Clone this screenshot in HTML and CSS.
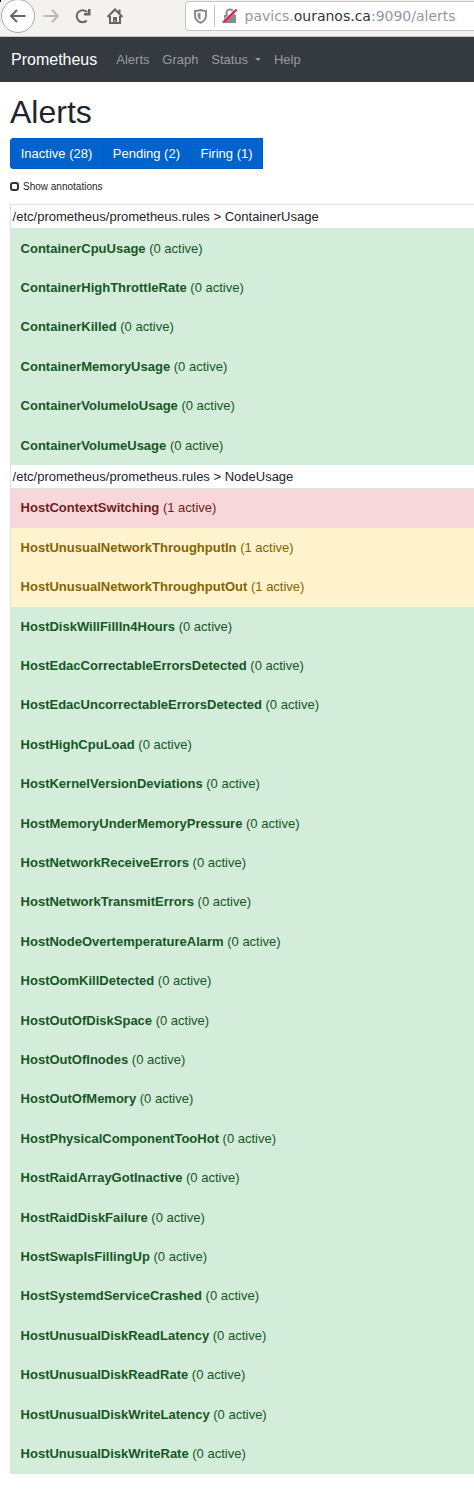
FILE: index.html
```
<!DOCTYPE html>
<html lang="en">
<head>
<meta charset="utf-8">
<title>Prometheus Alerts</title>
<link rel="stylesheet" href="styles.css">
</head>
<body>
<header class="toolbar">
  <span class="corner"></span>
  <span class="back"><svg width="16" height="14" viewBox="0 0 16 14"><path d="M15.500 7H1.500M7 1L1 7L7 13" /></svg></span>
  <svg class="forward" width="16" height="14" viewBox="0 0 16 14"><path d="M.5 7H14.500M9 1L15 7L9 13"/></svg>
  <svg class="reload" width="16" height="16" viewBox="0 0 16 16"><path d="M11.800 12.600A6 6 0 1 1 12.200 4.200"/><path class="solid" d="M13 1H15.500V7.500H9V5H13z"/></svg>
  <svg class="home" width="16" height="16" viewBox="0 0 16 16"><path d="M.5 9L8 1.500L15.500 9M3 8V15H13V8M12.500 1.500V5"/><path class="solid" d="M6 9H10V15H6z"/><path class="knob" d="M8 12V14"/></svg>
  <div class="address">
    <svg class="shield" width="13" height="15" viewBox="0 0 13 15"><path d="M6.500 1C5 1.700 3 2 1 2V6C1 10 3 12.500 6.500 13.800C10 12.500 12 10 12 6V2C10 2 8 1.700 6.500 1z"/><path class="solid" d="M6.500 3.700L3.600 4.200V6.500C3.700 8.700 4.500 10 6.500 11z"/></svg>
    <span class="divider"></span>
    <svg class="lock" width="16" height="16" viewBox="0 0 16 16"><path class="body" d="M2 7H14V15H2z"/><path class="shackle" d="M4.500 8V5A3.500 3.500 0 0 1 11.500 5V8"/><path class="halo" d="M.5 13L13.500 .5"/><path class="slash" d="M1 14.500L14.500 1.500"/></svg>
    <span class="url">pavics.<b>ouranos.ca</b>:9090/alerts</span>
  </div>
</header>
<nav class="navbar">
  <a class="brand">Prometheus</a>
  <a class="link">Alerts</a>
  <a class="link">Graph</a>
  <a class="link menu">Status</a>
  <a class="link">Help</a>
</nav>
<main>
  <h1>Alerts</h1>
  <div class="filters"><button>Inactive (28)</button><button>Pending (2)</button><button>Firing (1)</button></div>
  <label class="annotations"><span class="box"></span>Show annotations</label>
  <section class="rules">
    <div class="group">/etc/prometheus/prometheus.rules &gt; ContainerUsage</div>
    <div class="row"><b>ContainerCpuUsage</b> (0 active)</div>
    <div class="row"><b>ContainerHighThrottleRate</b> (0 active)</div>
    <div class="row"><b>ContainerKilled</b> (0 active)</div>
    <div class="row"><b>ContainerMemoryUsage</b> (0 active)</div>
    <div class="row"><b>ContainerVolumeIoUsage</b> (0 active)</div>
    <div class="row"><b>ContainerVolumeUsage</b> (0 active)</div>
    <div class="group">/etc/prometheus/prometheus.rules &gt; NodeUsage</div>
    <div class="row firing"><b>HostContextSwitching</b> (1 active)</div>
    <div class="row pending"><b>HostUnusualNetworkThroughputIn</b> (1 active)</div>
    <div class="row pending"><b>HostUnusualNetworkThroughputOut</b> (1 active)</div>
    <div class="row"><b>HostDiskWillFillIn4Hours</b> (0 active)</div>
    <div class="row"><b>HostEdacCorrectableErrorsDetected</b> (0 active)</div>
    <div class="row"><b>HostEdacUncorrectableErrorsDetected</b> (0 active)</div>
    <div class="row"><b>HostHighCpuLoad</b> (0 active)</div>
    <div class="row"><b>HostKernelVersionDeviations</b> (0 active)</div>
    <div class="row"><b>HostMemoryUnderMemoryPressure</b> (0 active)</div>
    <div class="row"><b>HostNetworkReceiveErrors</b> (0 active)</div>
    <div class="row"><b>HostNetworkTransmitErrors</b> (0 active)</div>
    <div class="row"><b>HostNodeOvertemperatureAlarm</b> (0 active)</div>
    <div class="row"><b>HostOomKillDetected</b> (0 active)</div>
    <div class="row"><b>HostOutOfDiskSpace</b> (0 active)</div>
    <div class="row"><b>HostOutOfInodes</b> (0 active)</div>
    <div class="row"><b>HostOutOfMemory</b> (0 active)</div>
    <div class="row"><b>HostPhysicalComponentTooHot</b> (0 active)</div>
    <div class="row"><b>HostRaidArrayGotInactive</b> (0 active)</div>
    <div class="row"><b>HostRaidDiskFailure</b> (0 active)</div>
    <div class="row"><b>HostSwapIsFillingUp</b> (0 active)</div>
    <div class="row"><b>HostSystemdServiceCrashed</b> (0 active)</div>
    <div class="row"><b>HostUnusualDiskReadLatency</b> (0 active)</div>
    <div class="row"><b>HostUnusualDiskReadRate</b> (0 active)</div>
    <div class="row"><b>HostUnusualDiskWriteLatency</b> (0 active)</div>
    <div class="row"><b>HostUnusualDiskWriteRate</b> (0 active)</div>
  </section>
</main>
</body>
</html>
```
FILE: styles.css
```
* { box-sizing: border-box; }
body {
  margin: 0;
  background: #fff;
  color: #212529;
  font: 13px/19.4px "Liberation Sans", Arial, sans-serif;
  overflow-x: hidden;
}
svg { flex: none; fill: none; stroke: #666664; stroke-width: 2; overflow: visible; }
svg .solid { fill: #666664; stroke: none; }

.toolbar {
  position: relative;
  display: flex;
  height: 37px;
  padding-left: 1px;
  background: #f3f2f0;
  border-bottom: 1px solid #c9c7c4;
  overflow: hidden;
}
.corner { position: absolute; left: 0; top: 0; width: 1px; height: 2px; background: #000; }
.back {
  flex: none;
  display: flex;
  align-items: center;
  justify-content: center;
  width: 34px;
  height: 34px;
  margin-top: -1px;
  border: 1px solid #aaa8a6;
  border-radius: 50%;
  background: #fff;
}
.forward { margin: 9px 0 0 8px; stroke: #b9b8b6; }
.reload { margin: 8px 0 0 16px; }
.home { margin: 8px 0 0 16px; }
.knob { stroke: #c9c9c7; stroke-width: 1; }
.address {
  flex: none;
  display: flex;
  align-items: center;
  width: 310px;
  height: 30px;
  margin: 1px 0 0 62px;
  padding-left: 8px;
  border: 1px solid #c9c4bf;
  border-radius: 4px;
  background: #fff;
}
.shield, .lock { stroke: #8b8b8b; }
.shield .solid { fill: #8b8b8b; }
.divider { width: 1px; height: 22px; margin: 0 7px 0 7px; background: #c4c4c4; }
.lock .body { fill: #8b8b8b; stroke: none; }
.lock .halo { stroke: #fff; stroke-width: 1; }
.lock .slash { stroke: #f0134d; stroke-width: 2; }
.url { margin-left: 6.600px; color: #979797; font: 14px/20px "DejaVu Sans", sans-serif; }
.url b { color: #353535; font-weight: 400; }

.navbar {
  display: flex;
  align-items: center;
  height: 45px;
  padding-left: 11px;
  background: #343a40;
}
.brand { margin-right: 19px; color: #fff; font-size: 16px; }
.link { margin-right: 12.800px; color: #999c9f; }
.menu::after {
  content: "";
  display: inline-block;
  margin-left: 7px;
  vertical-align: 3px;
  border: 3px solid transparent;
  border-top-color: #999c9f;
  border-bottom: 0;
}

main { padding-left: 10px; }
h1 { margin: 0; padding-top: 11px; height: 56px; font-size: 32px; line-height: 39px; font-weight: 400; }
.filters { display: flex; height: 31px; }
.filters button {
  padding: 0 9.750px;
  border: 1px solid #005cbf;
  background: #0062cc;
  color: #fff;
  font: 13px/19px "Liberation Sans", Arial, sans-serif;
}
.filters button + button { margin-left: -1px; }
.filters button:first-child { border-radius: 3px 0 0 3px; }
.annotations { display: flex; align-items: center; height: 35px; font-size: 10px; }
.box { width: 9px; height: 9px; margin-right: 4px; border: 2px solid #333; border-radius: 3px; }
.rules { width: 480px; border: solid #dee2e6; border-width: 1px 0 0 1px; }
.group { height: 23.6px; padding: 2px 0 0 1.600px; border-bottom: 1px solid #dee2e6; }
.row { height: 39.4px; padding: 10px 9.600px; background: #d4edda; color: #155724; }
.row:last-child { height: 40px; }
.firing { padding-top: 9.500px; background: #f8d7da; color: #721c24; }
.pending { background: #fff3cd; color: #856404; }
```
